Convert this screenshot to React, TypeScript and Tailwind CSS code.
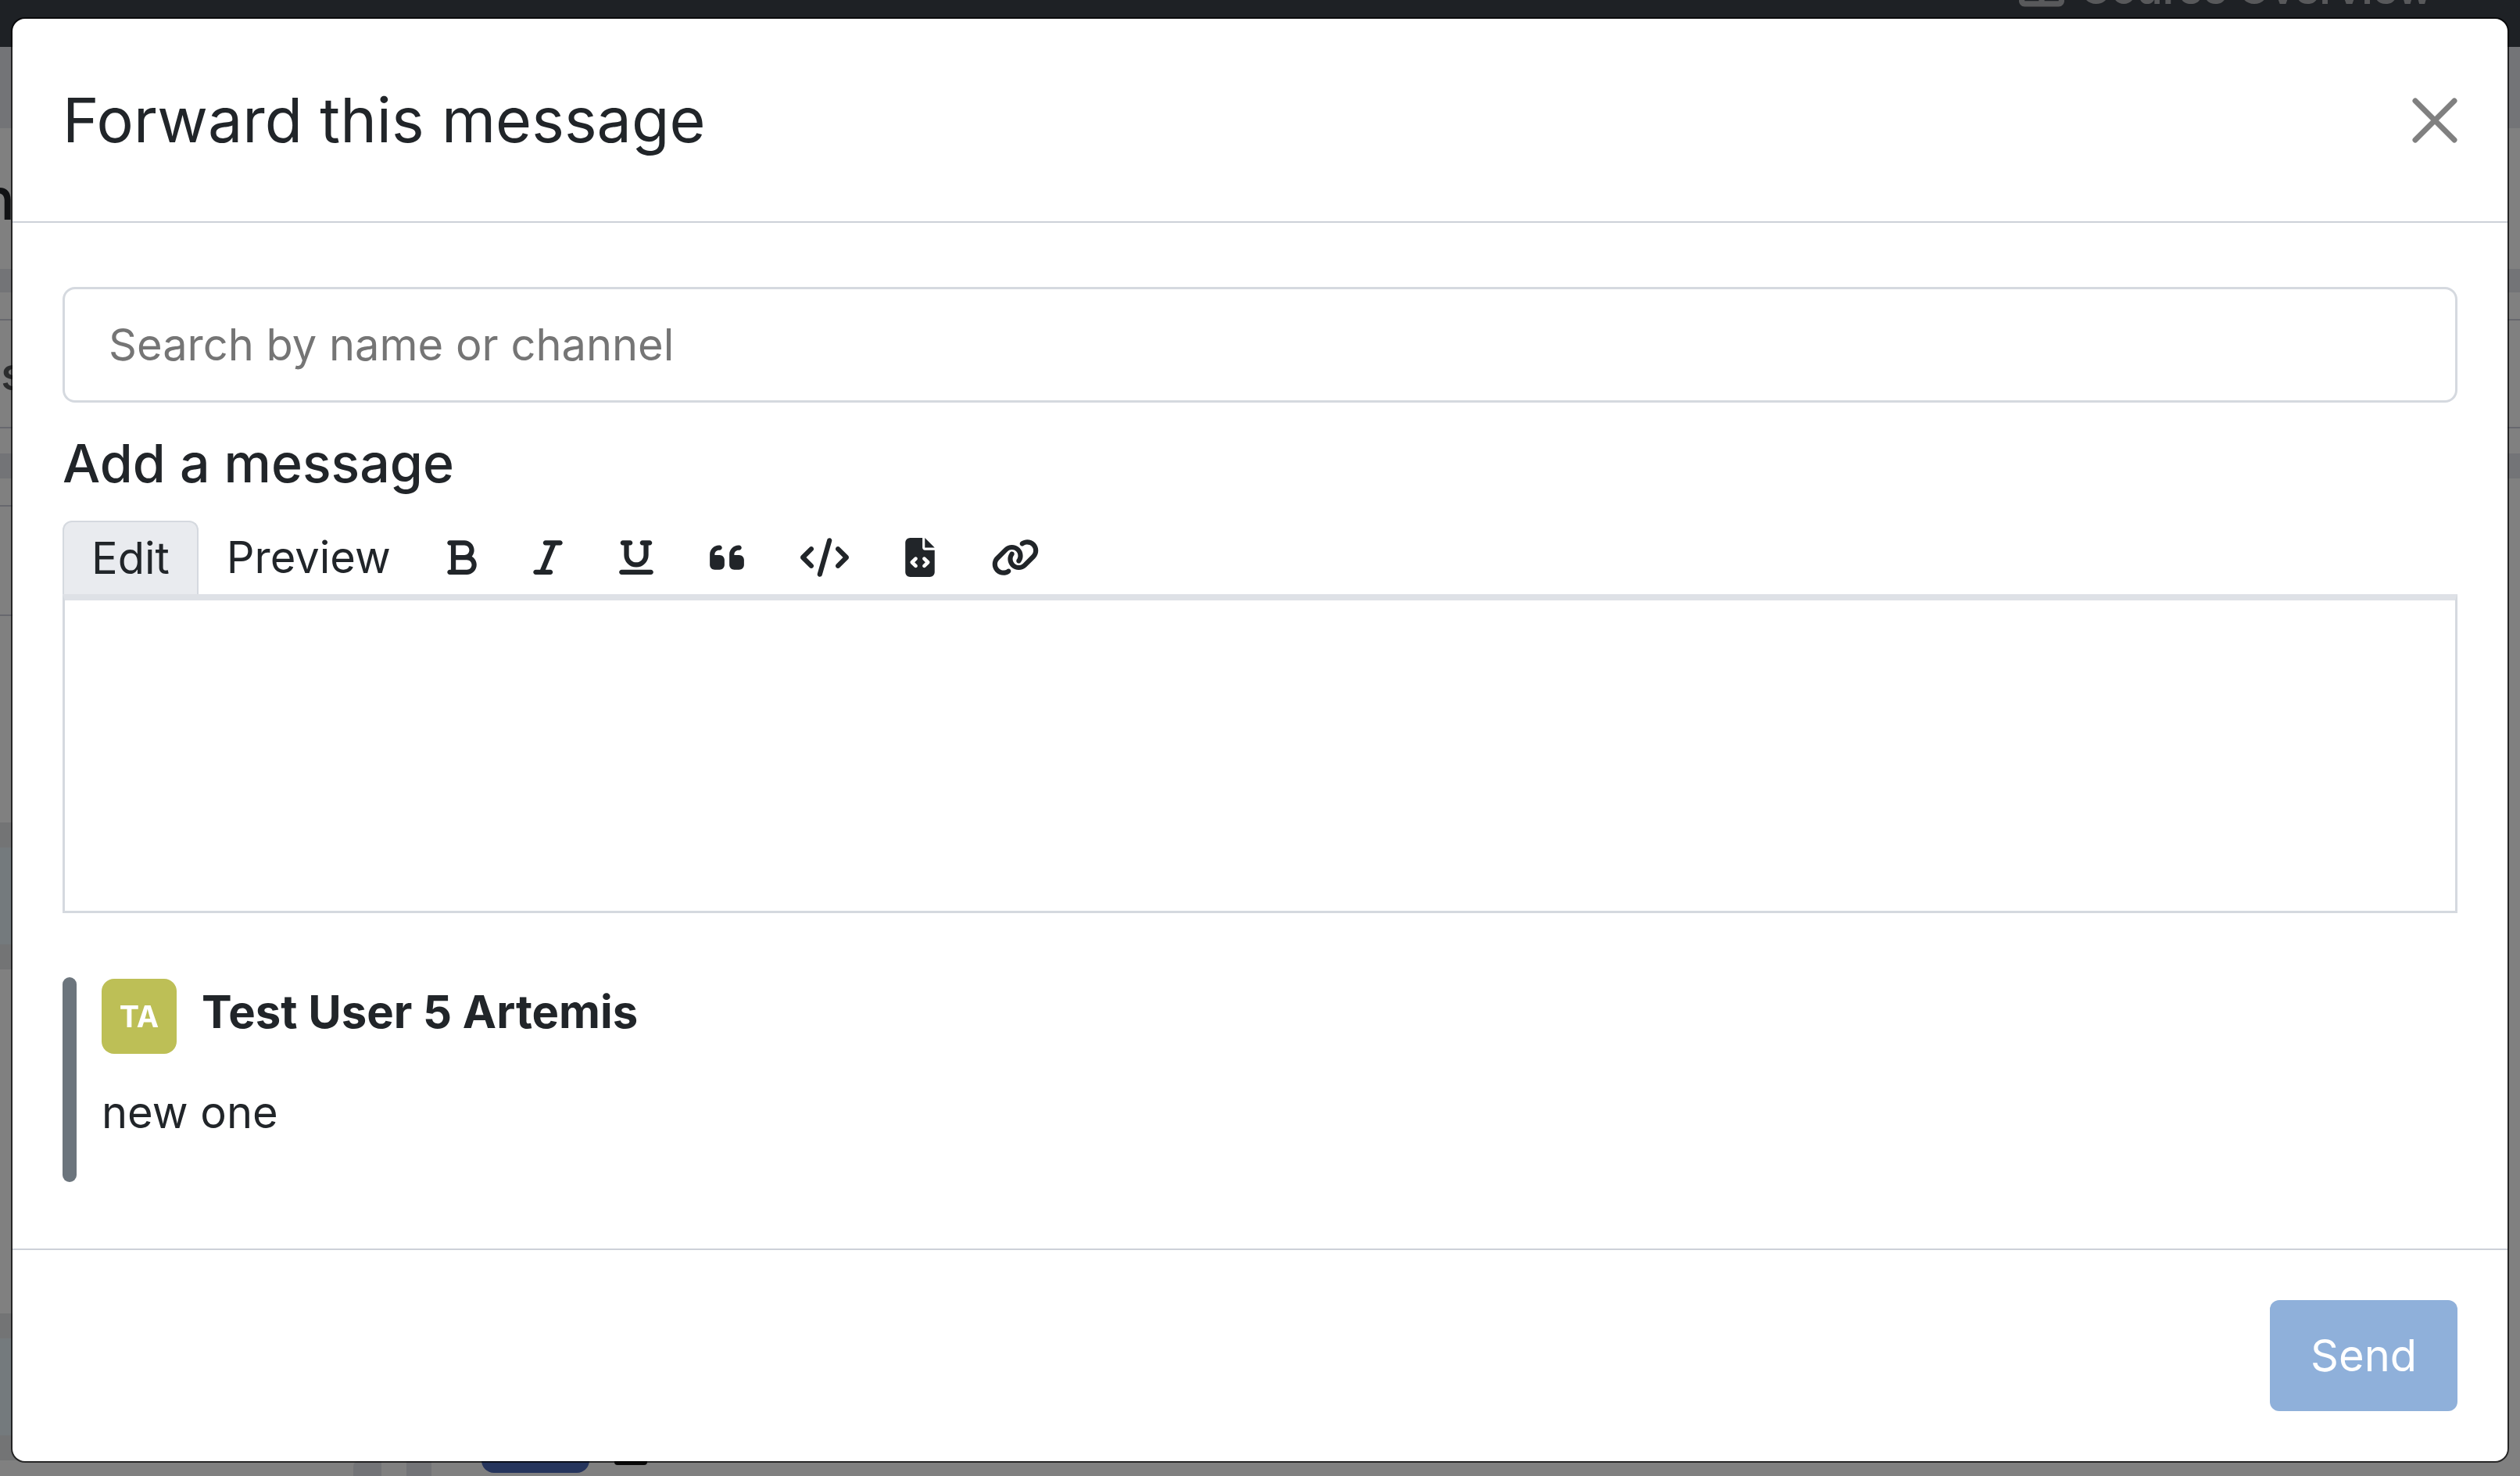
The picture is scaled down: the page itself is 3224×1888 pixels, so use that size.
import type { ReactNode } from "react";
import {
  FaBold,
  FaCode,
  FaFileCode,
  FaItalic,
  FaLink,
  FaQuoteLeft,
  FaTableColumns,
  FaUnderline,
} from "react-icons/fa6";

const formatActions = [
  { label: "Bold", Icon: FaBold, width: "w-[38px]" },
  { label: "Italic", Icon: FaItalic, width: "w-[38px]" },
  { label: "Underline", Icon: FaUnderline, width: "w-[44px]" },
  { label: "Quote", Icon: FaQuoteLeft, width: "w-[44px]" },
  { label: "Code", Icon: FaCode, width: "w-[62px]" },
  { label: "Code block", Icon: FaFileCode, width: "w-[38px]" },
  { label: "Link", Icon: FaLink, width: "w-[62px]" },
];

/* The course page, dimmed behind the dialog. */
function DimmedPage() {
  return (
    <div aria-hidden="true" className="flex h-screen flex-col overflow-hidden bg-[#808080]">
      <div className="flex h-[60px] shrink-0 items-start justify-end gap-5 bg-[#1e2125] pr-[112px] text-[#58595b]">
        <FaTableColumns className="-mt-[46px] h-[58px] w-[58px]" />
        <span className="-mt-[48px] text-[54px] leading-[68px] font-semibold">Course Overview</span>
      </div>
      <div className="h-[104px] shrink-0 bg-[#737477]" />
      <div className="flex h-[180px] w-[19px] shrink-0 items-center justify-end overflow-hidden text-[74px] font-medium text-[#111214]">
        n
      </div>
      <div className="h-[30px] shrink-0 bg-[#737477]" />
      <div className="h-[34px] shrink-0" />
      <div className="flex h-[140px] shrink-0 items-center border-y-2 border-[#67686e] pl-px text-[58px] font-medium text-[#2c2d2e]">
        s
      </div>
      <div className="h-[32px] shrink-0" />
      <div className="h-[32px] shrink-0 bg-[#737477]" />
      <div className="h-[34px] shrink-0" />
      <div className="h-[142px] w-1/2 shrink-0 border-y-2 border-[#67686e]" />
      <div className="h-[264px] shrink-0" />
      <div className="h-[188px] w-1/2 shrink-0 border-y-[32px] border-[#737475] bg-[#747a7d]" />
      <div className="h-[440px] shrink-0" />
      <div className="h-[188px] w-1/2 shrink-0 border-y-[32px] border-[#737475] bg-[#747a7d]" />
      <div className="flex grow items-start pl-[452px]">
        <div className="h-full w-9 rounded-tl-lg bg-[#737477]" />
        <div className="ml-8 h-full w-8 bg-[#737477]" />
        <div className="-mt-12 ml-16 h-16 w-[138px] rounded-2xl bg-[#26355d]" />
        <div className="-mt-1 ml-8 h-[10px] w-[42px] rounded-sm bg-[#0a0a0a]" />
      </div>
    </div>
  );
}

function Tab({ active, children }: { active?: boolean; children: ReactNode }) {
  return (
    <button
      type="button"
      role="tab"
      aria-selected={!!active}
      className={
        active
          ? "h-[94px] rounded-t-xl border-2 border-b-0 border-[#d5d9df] bg-[#e9ebef] px-[35px]"
          : "h-[94px] px-9"
      }
    >
      {children}
    </button>
  );
}

function ForwardDialog() {
  return (
    <form
      role="dialog"
      aria-modal="true"
      aria-labelledby="dialog-title"
      className="flex flex-col rounded-2xl bg-white shadow-[0_0_0_2px_rgba(0,0,0,0.7)]"
    >
      <header className="flex items-center justify-between border-b-2 border-[#cdd1d8] px-16 py-[76px]">
        <h1 id="dialog-title" className="text-[79px] leading-[107px]">
          Forward this message
        </h1>
        <button type="button" aria-label="Close" className="text-[#808080]">
          <svg viewBox="0 0 58 58" className="size-[58px]" fill="none" stroke="currentColor" strokeWidth="7" strokeLinecap="round">
            <path d="M4 4 54 54M54 4 4 54" />
          </svg>
        </button>
      </header>

      <div className="flex flex-col px-16 pt-[82px] pb-[85px]">
        <input
          type="text"
          aria-label="Search by name or channel"
          placeholder="Search by name or channel"
          className="h-[148px] w-full rounded-2xl border-3 border-[#d5d9df] px-[56px] placeholder:text-[#757575]"
        />
        <label htmlFor="message" className="mt-8 text-[68px] leading-[90px] font-medium">
          Add a message
        </label>
        <div className="mt-[29px] flex items-center">
          <div role="tablist" className="flex">
            <Tab active>Edit</Tab>
            <Tab>Preview</Tab>
          </div>
          {formatActions.map(({ label, Icon, width }) => (
            <button key={label} type="button" aria-label={label} className="px-9">
              <Icon className={`h-[50px] ${width}`} />
            </button>
          ))}
        </div>
        <textarea
          id="message"
          className="block h-[408px] w-full resize-none border-3 border-t-8 border-[#d5d9df] border-t-[#dee1e6] p-8"
        />

        <blockquote className="mt-[82px] flex gap-8">
          <div className="w-[18px] rounded-full bg-[#6c757d]" />
          <div className="flex flex-col pt-[2px] pb-[42px]">
            <div className="flex gap-8">
              <span className="flex size-24 items-center justify-center rounded-2xl bg-[#bdbf56] text-[38px] font-bold text-white">
                TA
              </span>
              <cite className="text-[58px] leading-[84px] font-bold not-italic">Test User 5 Artemis</cite>
            </div>
            <p className="mt-7 leading-[94px]">new one</p>
          </div>
        </blockquote>
      </div>

      <footer className="flex justify-end border-t-2 border-[#cdd1d8] px-16 py-16">
        <button type="submit" disabled className="h-[142px] rounded-xl bg-[#8fb0da] px-[52px] text-white">
          Send
        </button>
      </footer>
    </form>
  );
}

export default function App() {
  return (
    <div className="font-['Inter',sans-serif] text-[56px] text-[#212529]">
      <DimmedPage />
      <div className="fixed inset-0 overflow-hidden px-4 pt-6">
        <ForwardDialog />
      </div>
    </div>
  );
}
